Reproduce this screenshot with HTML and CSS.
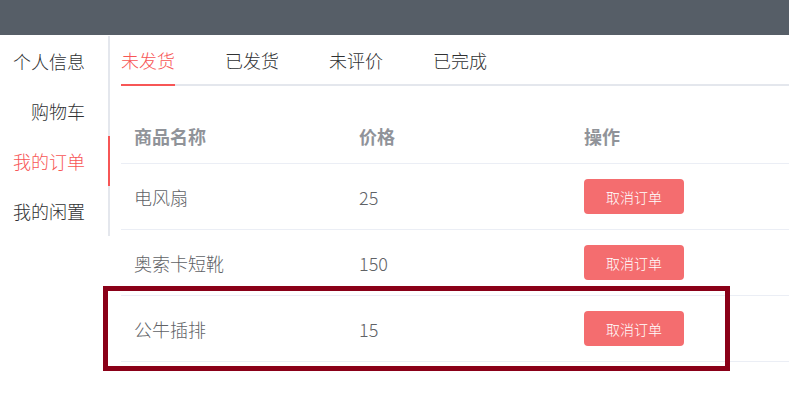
FILE: index.html
```html
<!DOCTYPE html>
<html lang="zh-CN">
<head>
<meta charset="utf-8">
<title>我的订单</title>
<link rel="stylesheet" href="styles.css">
</head>
<body>
<div class="topbar"></div>
<div class="main">
  <nav class="side">
    <div class="side-item">个人信息</div>
    <div class="side-item">购物车</div>
    <div class="side-item active">我的订单</div>
    <div class="side-item">我的闲置</div>
  </nav>
  <section class="content">
    <div class="tabs">
      <div class="tab active">未发货</div>
      <div class="tab">已发货</div>
      <div class="tab">未评价</div>
      <div class="tab">已完成</div>
    </div>
    <div class="table">
      <div class="row head">
        <div class="cell">商品名称</div>
        <div class="cell">价格</div>
        <div class="cell wide">操作</div>
      </div>
      <div class="row">
        <div class="cell">电风扇</div>
        <div class="cell">25</div>
        <div class="cell wide"><button class="btn">取消订单</button></div>
      </div>
      <div class="row">
        <div class="cell">奥索卡短靴</div>
        <div class="cell">150</div>
        <div class="cell wide"><button class="btn">取消订单</button></div>
      </div>
      <div class="row">
        <div class="cell">公牛插排</div>
        <div class="cell">15</div>
        <div class="cell wide"><button class="btn">取消订单</button></div>
      </div>
    </div>
  </section>
</div>
<div class="highlight"></div>
</body>
</html>
```
FILE: styles.css
```css
html, body {
  margin: 0;
  padding: 0;
  background: #fff;
}
body {
  font-family: "Noto Sans CJK SC", "Noto Sans", sans-serif;
  font-size: 18px;
  font-weight: 300;
  color: #303133;
  position: relative;
  overflow: hidden;
  height: 406px;
}
.topbar {
  height: 35px;
  background: #565e67;
}
.main {
  display: flex;
  padding-top: 1px;
}
.side {
  flex: none;
  width: 108px;
  border-right: 2px solid #e4e7ed;
  align-self: flex-start;
}
.side-item {
  height: 50px;
  line-height: 50px;
  text-align: right;
  padding-right: 23px;
  color: #303133;
  position: relative;
}
.side-item.active {
  color: #f75656;
}
.side-item.active::after {
  content: "";
  position: absolute;
  right: -2px;
  top: 0;
  width: 2px;
  height: 50px;
  background: #f75656;
}
.content {
  flex: 1;
  min-width: 0;
  margin-left: 11px;
}
.tabs {
  display: flex;
  height: 48px;
  border-bottom: 2px solid #e4e7ed;
}
.tab {
  line-height: 48px;
  padding: 0 25px;
  color: #303133;
  position: relative;
}
.tab:first-child {
  padding-left: 0;
}
.tab.active {
  color: #f75656;
}
.tab.active::after {
  content: "";
  position: absolute;
  left: 0;
  right: 25px;
  bottom: -2px;
  height: 2px;
  background: #f75656;
}
.table {
  margin-top: 23px;
}
.row {
  display: flex;
  align-items: center;
  height: 65px;
  border-bottom: 1px solid #ebeef5;
  color: #606266;
}
.row.head {
  height: 54px;
  color: #909399;
  font-weight: bold;
}
.cell {
  width: 212px;
  padding-left: 13px;
  flex: none;
}
.cell.wide {
  flex: 1;
}
.btn {
  display: block;
  width: 100px;
  height: 35px;
  border: none;
  border-radius: 4px;
  background: #f46d6f;
  color: #fff;
  font-family: "Noto Sans CJK SC", sans-serif;
  font-size: 14px;
  font-weight: 300;
  padding: 0;
}
.highlight {
  position: absolute;
  left: 103px;
  top: 286px;
  width: 617px;
  height: 75px;
  border: 5px solid #8a0018;
}
```
